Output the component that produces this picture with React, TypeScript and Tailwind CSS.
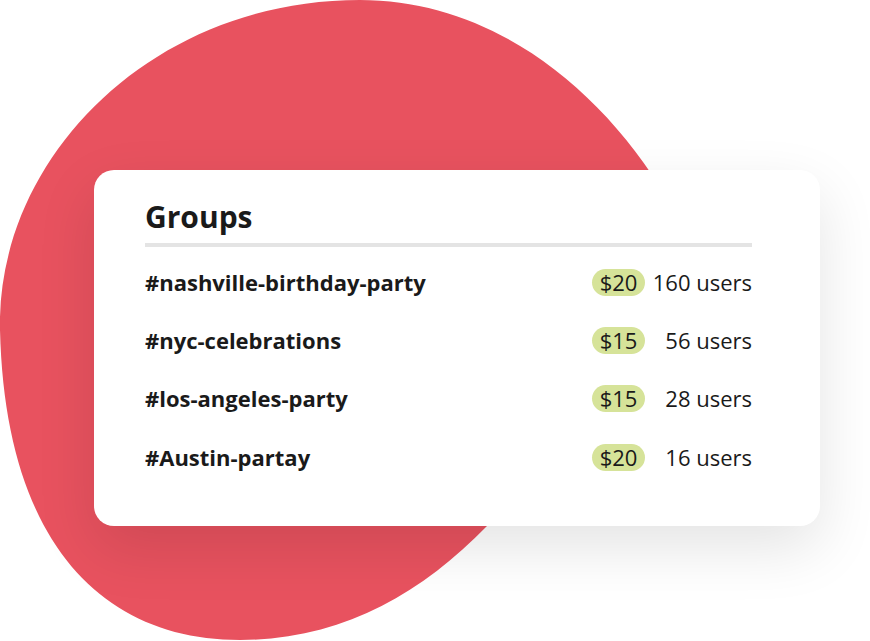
import React from "react";

const BLOB =
  "M 360 0 C 490 0, 600 85, 668 200 C 705 320, 560 455, 487 526 C 420 595, 340 640, 240 640 C 100 640, 5 540, 0 330 C -4 160, 150 0, 360 0 Z";

const rows = [
  { name: "#nashville-birthday-party", price: "$20", users: "160 users" },
  { name: "#nyc-celebrations", price: "$15", users: "56 users" },
  { name: "#los-angeles-party", price: "$15", users: "28 users" },
  { name: "#Austin-partay", price: "$20", users: "16 users" },
];

export default function App() {
  return (
    <div
      className="relative w-[870px] h-[641px] overflow-hidden bg-white"
      style={{ fontFamily: '"Open Sans", "Noto Sans", sans-serif' }}
    >
      <svg
        className="absolute inset-0"
        width="870"
        height="641"
        viewBox="0 0 870 641"
      >
        <path d={BLOB} fill="#e8525f" />
      </svg>
      <div className="relative ml-[94px] mt-[170px] w-[726px] h-[356px] rounded-[20px] bg-white shadow-[0_22px_60px_rgba(0,0,0,0.11)] pl-[51px] pr-[68px] pt-[32px] text-[#1a1a1a]">
        <h2 className="text-[30px] leading-none font-bold">Groups</h2>
        <div className="mt-[11px] h-[4px] bg-[#e4e4e4] mb-[6px]" />
        {rows.map((r) => (
          <div key={r.name} className="flex h-[58.3px] items-center justify-between">
            <span className="text-[22px] font-bold">{r.name}</span>
            <div className="flex items-center">
              <span className="flex h-[27px] w-[53px] items-center justify-center rounded-full bg-[#d6e399] text-[22px]">
                {r.price}
              </span>
              <span className="w-[107px] text-right text-[22px]">{r.users}</span>
            </div>
          </div>
        ))}
      </div>
    </div>
  );
}
